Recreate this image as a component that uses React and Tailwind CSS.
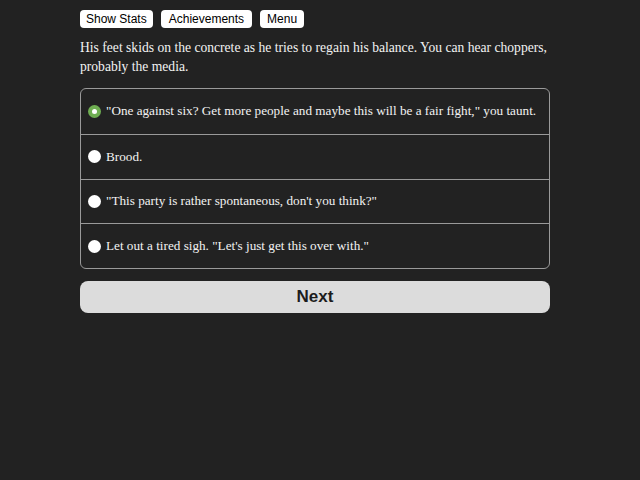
import { useState } from 'react';

const choices = [
  '"One against six? Get more people and maybe this will be a fair fight," you taunt.',
  'Brood.',
  '"This party is rather spontaneous, don\'t you think?"',
  'Let out a tired sigh. "Let\'s just get this over with."',
];

function Radio({ checked }) {
  return checked ? (
    <span className="w-[13px] h-[13px] rounded-full bg-[#6fae52] flex items-center justify-center shrink-0">
      <span className="w-[5px] h-[5px] rounded-full bg-white" />
    </span>
  ) : (
    <span className="w-[13px] h-[13px] rounded-full bg-white shrink-0" />
  );
}

export default function App() {
  const [selected, setSelected] = useState(0);

  return (
    <div className="min-h-[480px] bg-[#222222] text-[#f2f2f2]">
      <div className="w-[470px] ml-[80px] pt-[10px]">
        {/* Top buttons */}
        <div className="flex gap-[8px] font-['Liberation_Sans',sans-serif] text-[12px] text-black">
          <button className="h-[18px] px-[6px] bg-white rounded-[4px] leading-none">Show Stats</button>
          <button className="h-[18px] px-[8px] bg-white rounded-[4px] leading-none">Achievements</button>
          <button className="h-[18px] px-[7px] bg-white rounded-[4px] leading-none">Menu</button>
        </div>

        <p className="mt-[10px] font-['Liberation_Serif',serif] text-[13.6px] leading-[19px]">
          His feet skids on the concrete as he tries to regain his balance. You can hear choppers, probably the media.
        </p>

        {/* Choices */}
        <div className="mt-[12px] border border-[#9a9a9a] rounded-[6px] font-['Liberation_Serif',serif] text-[13.2px]">
          {choices.map((c, i) => (
            <label
              key={i}
              onClick={() => setSelected(i)}
              className={`h-[44.75px] flex items-center gap-[5px] pl-[7px] cursor-pointer ${i > 0 ? 'border-t border-[#9a9a9a]' : ''}`}
            >
              <Radio checked={selected === i} />
              <span>{c}</span>
            </label>
          ))}
        </div>

        <button className="mt-[12px] w-full h-[32px] rounded-[8px] bg-[#dcdcdc] text-[#1c1c1c] font-['Liberation_Sans',sans-serif] font-bold text-[17px]">
          Next
        </button>
      </div>
    </div>
  );
}
